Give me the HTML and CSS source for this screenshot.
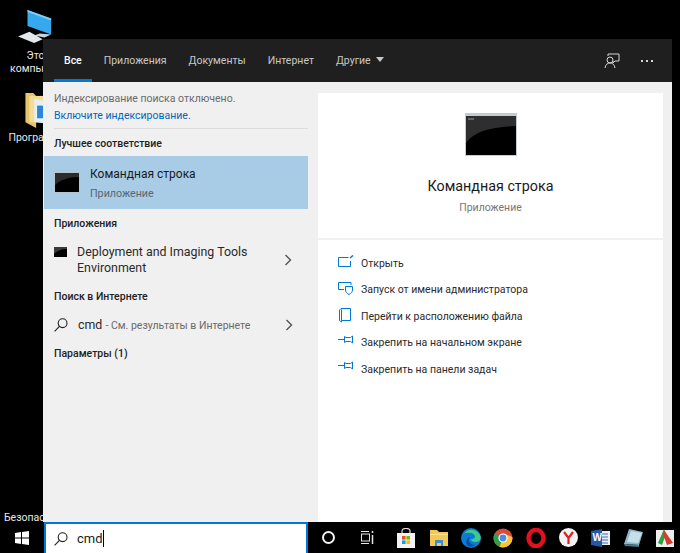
FILE: index.html
```html
<!DOCTYPE html>
<html lang="ru">
<head>
    <meta charset="UTF-8">
    <title>Поиск</title>
    <link rel="stylesheet" href="styles.css">
</head>
<body>
    <div class="desktop">
        <div class="desk-icon desk-pc">
            <svg width="36" height="34" viewBox="0 0 38 36">
                <path d="M10 0 L35 9 V26 L10 17 Z" fill="#35a8ee"/>
                <path d="M10 0 L35 9 V11 L10 2 Z" fill="#7fd0f8"/>
                <path d="M23 25 L35 26 L28 29 L17 27 Z" fill="#c9d2d8"/>
                <path d="M0 28 L12 23 L26 31 L17 35 Z" fill="#e4e8ea"/>
            </svg>
            <div class="desk-label">Этот</div>
            <div class="desk-label">компьютер</div>
        </div>
        <div class="desk-icon desk-folder">
            <svg width="36" height="35" viewBox="0 0 36 36">
                <path d="M2 0 H10 L13 3 V36 L2 30 Z" fill="#e8c56a"/>
                <path d="M6 3 H28 V30 H6 Z" fill="#f4dc94"/>
                <path d="M11 6 L30 10 V32 L11 30 Z" fill="#e6eef4"/>
                <path d="M14 13 H24 V26 H14 Z" fill="#2b86d4"/>
                <path d="M28 8 H36 V30 H28 Z" fill="#6cb7a8"/>
            </svg>
            <div class="desk-label">Программы</div>
        </div>
        <div class="desk-label-bottom">Безопасность</div>

        <div class="panel">
            <div class="panel-head">
                <nav class="tabs">
                    <span class="tab active">Все</span>
                    <span class="tab">Приложения</span>
                    <span class="tab">Документы</span>
                    <span class="tab">Интернет</span>
                    <span class="tab">Другие <i class="caret"></i></span>
                </nav>
                <div class="head-tools">
                    <svg width="16" height="16" viewBox="0 0 16 16" fill="none" stroke="#d6d6d6" stroke-width="1">
                        <path d="M4 3 V1 H15 V8 H11 L9 10 V8"/>
                        <circle cx="6" cy="7" r="3"/>
                        <path d="M1 15 C1.5 11.5 3.5 10 6 10 C8.5 10 10.5 11.5 11 15"/>
                    </svg>
                    <span class="dots"><i></i><i></i><i></i></span>
                </div>
            </div>
            <div class="panel-body">
                <div class="results">
                    <div class="notice">
                        <p>Индексирование поиска отключено.</p>
                        <a>Включите индексирование.</a>
                    </div>
                    <h4 class="group first">Лучшее соответствие</h4>
                    <div class="best">
                        <div class="cmd-icon small">
                            <svg viewBox="0 0 26 21" width="26" height="21">
                                <rect width="26" height="21" fill="#b9c4cc"/>
                                <rect x="1" y="1" width="24" height="19" fill="#000"/>
                                <path d="M1 1 H25 V5 C14 5 6 8 1 13 Z" fill="#2c2c2c"/>
                            </svg>
                        </div>
                        <div>
                            <div class="best-title">Командная строка</div>
                            <div class="best-sub">Приложение</div>
                        </div>
                    </div>
                    <h4 class="group">Приложения</h4>
                    <div class="row row-app">
                        <svg class="row-icon" viewBox="0 0 13 10" width="13" height="10">
                            <rect width="13" height="10" fill="#000"/>
                            <path d="M0 0 H13 V2 C7 2 3 4 0 7 Z" fill="#3a3a3a"/>
                        </svg>
                        <div class="row-text">Deployment and Imaging Tools Environment</div>
                        <svg class="chev" width="8" height="12" viewBox="0 0 8 12" fill="none" stroke="#555" stroke-width="1.4"><path d="M1.5 1 L6.5 6 L1.5 11"/></svg>
                    </div>
                    <h4 class="group web">Поиск в Интернете</h4>
                    <div class="row row-web">
                        <svg class="row-icon" width="14" height="14" viewBox="0 0 14 14" fill="none" stroke="#222" stroke-width="1.1"><circle cx="8.6" cy="5.2" r="4.4"/><path d="M5.4 8.4 L0.6 13.4"/></svg>
                        <div class="row-text">cmd <small>- См. результаты в Интернете</small></div>
                        <svg class="chev" width="8" height="12" viewBox="0 0 8 12" fill="none" stroke="#555" stroke-width="1.4"><path d="M1.5 1 L6.5 6 L1.5 11"/></svg>
                    </div>
                    <h4 class="group settings">Параметры (1)</h4>
                </div>
                <div class="detail">
                    <div class="detail-top">
                        <div class="cmd-big">
                            <svg viewBox="0 0 52 43" width="52" height="43">
                                <rect width="52" height="43" fill="#c3ccd2"/>
                                <rect x="1" y="3" width="50" height="39" fill="#000"/>
                                <path d="M1 3 H51 V13 C28 14 9 18 1 30 Z" fill="#2e2e2e"/>
                                <path d="M3 6 H9" stroke="#999" stroke-width="1"/>
                            </svg>
                        </div>
                        <div class="detail-title">Командная строка</div>
                        <div class="detail-sub">Приложение</div>
                    </div>
                    <ul class="actions">
                        <li>
                            <svg width="16" height="12" viewBox="0 0 16 12" fill="none" stroke="#0078d7"><path d="M10.5 2.5 H0.5 V11.5 H12.5 V6"/><path d="M12 3 L15 0.5" stroke-width="1.5"/></svg>
                            Открыть
                        </li>
                        <li>
                            <svg width="16" height="13" viewBox="0 0 16 13" fill="none" stroke="#0078d7"><path d="M6 7.5 H0.5 V0.5 H13 V3"/><path d="M7.5 4.5 H14.5 V8 C14.5 10 13 11.5 11 12.5 C9 11.5 7.5 10 7.5 8 Z"/></svg>
                            Запуск от имени администратора
                        </li>
                        <li>
                            <svg width="14" height="15" viewBox="0 0 14 15" fill="none" stroke="#0078d7"><path d="M3 0.5 H12.5 V12.5 H3.5 V14 L1.5 12.5 V2 Z"/><path d="M3.5 1.5 V12.5"/></svg>
                            Перейти к расположению файла
                        </li>
                        <li>
                            <svg width="15" height="9" viewBox="0 0 15 9" fill="none" stroke="#0078d7"><path d="M0 4.5 H6"/><path d="M6.5 1.5 V7.5 L8 6.5 H12.5 L14.5 8 V1 L12.5 2.5 H8 Z"/></svg>
                            Закрепить на начальном экране
                        </li>
                        <li>
                            <svg width="15" height="9" viewBox="0 0 15 9" fill="none" stroke="#0078d7"><path d="M0 4.5 H6"/><path d="M6.5 1.5 V7.5 L8 6.5 H12.5 L14.5 8 V1 L12.5 2.5 H8 Z"/></svg>
                            Закрепить на панели задач
                        </li>
                    </ul>
                </div>
            </div>
        </div>
    </div>

    <div class="taskbar">
        <div class="start">
            <svg width="14" height="14" viewBox="0 0 14 14" fill="#fff"><path d="M0 2 L6 1.1 V6.6 H0 Z M7 1 L14 0 V6.6 H7 Z M0 7.4 H6 V12.9 L0 12 Z M7 7.4 H14 V14 L7 13 Z"/></svg>
        </div>
        <div class="searchbox">
            <svg width="14" height="14" viewBox="0 0 14 14" fill="none" stroke="#222" stroke-width="1.1"><circle cx="8.6" cy="5.2" r="4.4"/><path d="M5.4 8.4 L0.6 13.4"/></svg>
            <span class="typed">cmd</span><i class="cursor"></i>
        </div>
        <div class="tray">
            <span class="tb tb-cortana"><i class="ring"></i></span>
            <span class="tb tb-view">
                <svg width="14" height="13" viewBox="0 0 14 13" fill="none" stroke="#e6e6e6"><path d="M1 0.5 H9 M1 12.5 H9"/><rect x="1.5" y="3" width="8" height="7"/><path d="M12.5 0 V2 M12.5 4 V13" stroke-width="1.5"/></svg>
            </span>
            <span class="tb">
                <svg width="20" height="20" viewBox="0 0 20 20">
                    <path d="M6 6 V3 C6 1 7.5 0.5 10 0.5 C12.5 0.5 14 1 14 3 V6" fill="none" stroke="#ddd" stroke-width="1.2"/>
                    <path d="M1 5 H19 V20 H1 Z" fill="#f2f2f2"/>
                    <rect x="6" y="8" width="3.6" height="3.6" fill="#f25022"/>
                    <rect x="10.4" y="8" width="3.6" height="3.6" fill="#7fba00"/>
                    <rect x="6" y="12.4" width="3.6" height="3.6" fill="#00a4ef"/>
                    <rect x="10.4" y="12.4" width="3.6" height="3.6" fill="#ffb900"/>
                </svg>
            </span>
            <span class="tb">
                <svg width="18" height="16" viewBox="0 0 18 16">
                    <path d="M0 0 H7 L9 2 H18 V16 H0 Z" fill="#f5c94f"/>
                    <path d="M0 4 H18 V5 H0 Z" fill="#fbe49a"/>
                    <path d="M5 10 H13 V16 H11 V13 H7 V16 H5 Z" fill="#3b8fd6"/>
                </svg>
            </span>
            <span class="tb">
                <svg width="20" height="20" viewBox="0 0 20 20">
                    <circle cx="10" cy="10" r="10" fill="#0c7bd3"/>
                    <path d="M3 6 C6 0 16 0 19.5 8 C20.5 12 18 14 14 14 C12 14 10 13 9.5 11 C11 11.5 14 11 14 8.5 C14 5.5 7 3.5 3 6 Z" fill="#3ecb8a"/>
                    <path d="M9 9 C6 12 9 17 14 17 C12 19 9 19 7 18 C4 16 5 10 9 9 Z" fill="#0a4f9c"/>
                </svg>
            </span>
            <span class="tb">
                <svg width="20" height="20" viewBox="0 0 20 20">
                    <circle cx="10" cy="10" r="9.5" fill="#dd4b3e"/>
                    <path d="M10 10 L1.8 5.2 A9.5 9.5 0 0 0 6.5 18.8 Z" fill="#2f9e4f"/>
                    <path d="M10 10 L6.5 18.8 A9.5 9.5 0 0 0 19.4 9 L10 5.5 Z" fill="#f7c52c"/>
                    <circle cx="10" cy="10" r="4.6" fill="#fff"/>
                    <circle cx="10" cy="10" r="3.4" fill="#4a8bea"/>
                </svg>
            </span>
            <span class="tb">
                <svg width="20" height="20" viewBox="0 0 20 20"><ellipse cx="10" cy="10" rx="7.5" ry="8.2" fill="none" stroke="#e0121f" stroke-width="4.4"/></svg>
            </span>
            <span class="tb">
                <svg width="19" height="19" viewBox="0 0 19 19">
                    <circle cx="9.5" cy="9.5" r="9.5" fill="#f4f2f2"/>
                    <path d="M5 4 L9.5 10 L14 4 M9.5 10 V16" fill="none" stroke="#e02020" stroke-width="2.2"/>
                </svg>
            </span>
            <span class="tb">
                <svg width="19" height="18" viewBox="0 0 19 18">
                    <rect x="8" y="2" width="11" height="14" fill="#e8eef6"/>
                    <path d="M11 5 H17 M11 8 H17 M11 11 H17 M11 14 H17" stroke="#3c6fb4"/>
                    <path d="M0 2 L11 0 V18 L0 16 Z" fill="#2458a6"/>
                    <text x="1.6" y="12" class="word-w">W</text>
                </svg>
            </span>
            <span class="tb">
                <svg width="20" height="18" viewBox="0 0 20 18">
                    <path d="M6 0 L20 3 L16 16 L1 15 Z" fill="#8fb6c8"/>
                    <path d="M8 2 L19 4 L15 14 L4 13 Z" fill="#c6e0ea"/>
                    <path d="M1 15 L16 16 L16 18 L2 17 Z" fill="#4b7a90"/>
                </svg>
            </span>
            <span class="tb">
                <svg width="20" height="20" viewBox="0 0 20 20">
                    <rect x="1" y="2" width="18" height="17" fill="#eeeeee"/>
                    <path d="M9 1 L3 15 L7 17 L11 6 Z" fill="#2ea043"/>
                    <path d="M9 2 L18 15 L12 17 L8 6 Z" fill="#d93a2b"/>
                </svg>
            </span>
        </div>
    </div>
</body>
</html>
```

FILE: styles.css
```css
* {
    box-sizing: border-box;
}
body {
    margin: 0;
    width: 680px;
    height: 553px;
    background: #000;
    font-family: Roboto, "Noto Sans", sans-serif;
    display: flex;
    flex-direction: column;
    overflow: hidden;
}
.desktop {
    flex: 1;
    position: relative;
}
.desk-icon {
    position: absolute;
    left: 0;
    width: 76px;
    color: #e8e8e8;
    font-size: 10.5px;
    line-height: 13px;
}
.desk-icon svg {
    display: block;
}
.desk-pc {
    top: 10px;
}
.desk-pc svg {
    margin: 0 0 5px 18px;
}
.desk-folder {
    top: 93px;
}
.desk-folder svg {
    margin: 0 0 3px 23px;
}
.desk-label {
    text-align: center;
    white-space: nowrap;
}
.desk-label-bottom {
    position: absolute;
    left: 4px;
    top: 511px;
    color: #e8e8e8;
    font-size: 10.5px;
    line-height: 14px;
    white-space: nowrap;
}

/* search flyout */
.panel {
    position: absolute;
    left: 43px;
    top: 39px;
    width: 629px;
    height: 483px;
    display: flex;
    flex-direction: column;
    background: #f0f0f0;
}
.panel-head {
    height: 43px;
    background: #1f1f1f;
    display: flex;
    justify-content: space-between;
    padding-left: 11px;
    color: #c8c8c8;
    font-size: 10.5px;
}
.tabs {
    display: flex;
}
.tab {
    height: 43px;
    line-height: 44px;
    padding: 0 10px;
    margin-right: 2px;
    white-space: nowrap;
}
.tab.active {
    color: #fff;
    font-weight: 500;
    border-bottom: 3px solid #0078d7;
}
.caret {
    display: inline-block;
    margin-left: 3px;
    vertical-align: 2px;
    border-left: 4.5px solid transparent;
    border-right: 4.5px solid transparent;
    border-top: 5px solid #c8c8c8;
}
.head-tools {
    display: flex;
    align-items: center;
    gap: 21px;
    padding-right: 19px;
}
.dots {
    display: flex;
    gap: 3px;
}
.dots i {
    width: 2px;
    height: 2px;
    background: #d6d6d6;
}
.panel-body {
    flex: 1;
    display: flex;
    min-height: 0;
}

/* left column */
.results {
    width: 265px;
    padding-left: 1px;
}
.notice {
    margin-left: 10px;
    padding: 9px 0 4px;
    border-bottom: 1px solid #dcdcdc;
    font-size: 10.5px;
    line-height: 16.5px;
}
.notice p {
    margin: 0;
    color: #6a6a6a;
}
.notice a {
    display: block;
    color: #0067c0;
}
.group {
    margin: 0;
    padding-left: 10px;
    font-size: 10.5px;
    line-height: 16px;
    font-weight: 500;
    color: #222;
}
.group.first {
    padding-top: 7px;
    padding-bottom: 4px;
}
.best {
    height: 53px;
    background: #a8cbe6;
    display: flex;
    align-items: center;
    padding-left: 10px;
    gap: 10px;
    margin-bottom: 7px;
}
.cmd-icon {
    display: flex;
}
.best-title {
    font-size: 12px;
    line-height: 18px;
    color: #1a1a1a;
}
.best-sub {
    margin-top: 3px;
    font-size: 10.7px;
    line-height: 15px;
    color: #5a6670;
}
.row {
    display: flex;
    padding-left: 10px;
    color: #2a2a2a;
}
.row-app {
    height: 50px;
    padding-top: 12px;
    align-items: flex-start;
}
.row-web {
    height: 40px;
    align-items: center;
}
.row-icon {
    flex: none;
    margin-right: 10px;
}
.row-app .row-icon {
    margin-top: 3px;
}
.row-text {
    width: 207px;
    font-size: 12.4px;
    line-height: 16px;
}
.row-text small {
    font-size: 10.5px;
    color: #6a6a6a;
    white-space: nowrap;
}
.chev {
    flex: none;
    margin-left: 0;
}
.row-app .chev {
    margin-top: 10px;
}
.group.web {
    padding-top: 7px;
}
.group.settings {
    padding-top: 1px;
}

/* right column */
.detail {
    width: 345px;
    margin-left: 10px;
    padding-top: 11px;
    display: flex;
    flex-direction: column;
    gap: 2px;
}
.detail-top {
    height: 145px;
    background: #fff;
    display: flex;
    flex-direction: column;
    align-items: center;
    padding-top: 20px;
}
.cmd-big {
    display: flex;
    margin-bottom: 20px;
}
.detail-title {
    font-size: 14.3px;
    line-height: 20px;
    color: #1a1a1a;
}
.detail-sub {
    margin-top: 5px;
    font-size: 10.5px;
    line-height: 14px;
    color: #777;
}
.actions {
    flex: 1;
    margin: 0;
    padding: 10px 0 0 20px;
    list-style: none;
    background: #fff;
}
.actions li {
    height: 26.5px;
    display: flex;
    align-items: center;
    font-size: 10.5px;
    color: #2a2a2a;
    position: relative;
    padding-left: 23px;
}
.actions li svg {
    position: absolute;
    left: 0;
    top: 5px;
}

/* taskbar */
.taskbar {
    flex: none;
    height: 31px;
    display: flex;
    background: #000;
}
.start {
    flex: none;
    width: 44px;
    display: flex;
    align-items: center;
    justify-content: center;
}
.searchbox {
    flex: none;
    width: 264px;
    background: #fff;
    border: 2px solid #0078d7;
    border-bottom: 0;
    display: flex;
    align-items: center;
    padding-left: 8px;
    color: #1a1a1a;
    font-size: 13px;
}
.typed {
    margin-left: 9px;
}
.cursor {
    width: 1px;
    height: 17px;
    background: #000;
}
.tray {
    flex: none;
    display: flex;
    padding-left: 4px;
}
.tb {
    flex: none;
    width: 32.4px;
    display: flex;
    align-items: center;
    justify-content: center;
}
.tb-cortana {
    width: 32px;
}
.tb-view {
    width: 46px;
}
.ring {
    width: 13px;
    height: 13px;
    border: 2px solid #f2f2f2;
    border-radius: 50%;
}
.word-w {
    fill: #fff;
    font-family: "Liberation Sans", sans-serif;
    font-size: 10px;
    font-weight: 700;
}
```
